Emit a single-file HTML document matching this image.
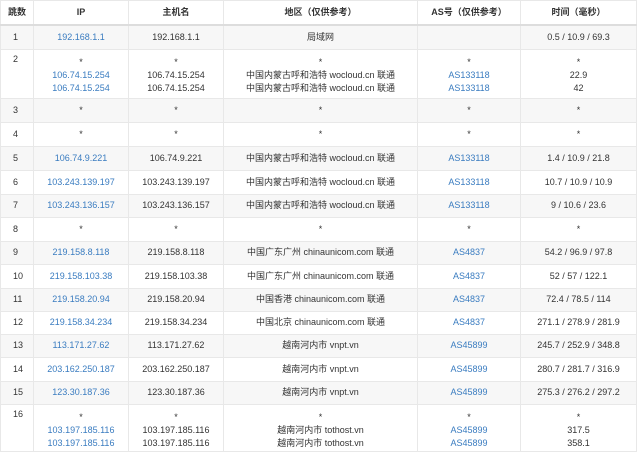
<!DOCTYPE html><html><head><meta charset="utf-8"><style>
body{margin:0;background:#fff;font-family:"Liberation Sans","Noto Sans CJK SC",sans-serif;font-size:9px;color:#333;width:640px;height:453px;overflow:hidden}
table{border-collapse:collapse;table-layout:fixed;width:636px;position:absolute;left:0;top:0}
td,th{border:1px solid #e8e8e8;text-align:center;padding:0;line-height:13px;vertical-align:middle}
th{font-weight:bold;height:23px;border-bottom:2px solid #ddd;color:#333}
tr:nth-child(odd) td{background:#f7f7f7}
td:first-child{text-align:left;padding-left:12px}
.b{color:#3a7cc0}
.m td{vertical-align:top;padding-top:6px}
.m td:first-child{padding-top:3px}
</style></head><body>
<table>
<colgroup><col style="width:33px"><col style="width:95px"><col style="width:95px"><col style="width:194px"><col style="width:103px"><col style="width:116px"></colgroup>
<thead><tr><th>跳数</th><th>IP</th><th>主机名</th><th>地区（仅供参考）</th><th>AS号（仅供参考）</th><th>时间（毫秒）</th></tr></thead>
<tbody>
<tr style="height:24px"><td>1</td><td class="b">192.168.1.1</td><td>192.168.1.1</td><td>局域网</td><td></td><td>0.5 / 10.9 / 69.3</td></tr>
<tr class="m" style="height:49px"><td>2</td><td>*<br><span class="b">106.74.15.254<br>106.74.15.254</span></td><td>*<br>106.74.15.254<br>106.74.15.254</td><td>*<br>中国内蒙古呼和浩特 wocloud.cn 联通<br>中国内蒙古呼和浩特 wocloud.cn 联通</td><td>*<br><span class="b">AS133118<br>AS133118</span></td><td>*<br>22.9<br>42</td></tr>
<tr style="height:24px"><td>3</td><td>*</td><td>*</td><td>*</td><td>*</td><td>*</td></tr>
<tr style="height:24px"><td>4</td><td>*</td><td>*</td><td>*</td><td>*</td><td>*</td></tr>
<tr style="height:24px"><td>5</td><td class="b">106.74.9.221</td><td>106.74.9.221</td><td>中国内蒙古呼和浩特 wocloud.cn 联通</td><td class="b">AS133118</td><td>1.4 / 10.9 / 21.8</td></tr>
<tr style="height:24px"><td>6</td><td class="b">103.243.139.197</td><td>103.243.139.197</td><td>中国内蒙古呼和浩特 wocloud.cn 联通</td><td class="b">AS133118</td><td>10.7 / 10.9 / 10.9</td></tr>
<tr style="height:23px"><td>7</td><td class="b">103.243.136.157</td><td>103.243.136.157</td><td>中国内蒙古呼和浩特 wocloud.cn 联通</td><td class="b">AS133118</td><td>9 / 10.6 / 23.6</td></tr>
<tr style="height:24px"><td>8</td><td>*</td><td>*</td><td>*</td><td>*</td><td>*</td></tr>
<tr style="height:23px"><td>9</td><td class="b">219.158.8.118</td><td>219.158.8.118</td><td>中国广东广州 chinaunicom.com 联通</td><td class="b">AS4837</td><td>54.2 / 96.9 / 97.8</td></tr>
<tr style="height:24px"><td>10</td><td class="b">219.158.103.38</td><td>219.158.103.38</td><td>中国广东广州 chinaunicom.com 联通</td><td class="b">AS4837</td><td>52 / 57 / 122.1</td></tr>
<tr style="height:23px"><td>11</td><td class="b">219.158.20.94</td><td>219.158.20.94</td><td>中国香港 chinaunicom.com 联通</td><td class="b">AS4837</td><td>72.4 / 78.5 / 114</td></tr>
<tr style="height:23px"><td>12</td><td class="b">219.158.34.234</td><td>219.158.34.234</td><td>中国北京 chinaunicom.com 联通</td><td class="b">AS4837</td><td>271.1 / 278.9 / 281.9</td></tr>
<tr style="height:23px"><td>13</td><td class="b">113.171.27.62</td><td>113.171.27.62</td><td>越南河内市 vnpt.vn</td><td class="b">AS45899</td><td>245.7 / 252.9 / 348.8</td></tr>
<tr style="height:24px"><td>14</td><td class="b">203.162.250.187</td><td>203.162.250.187</td><td>越南河内市 vnpt.vn</td><td class="b">AS45899</td><td>280.7 / 281.7 / 316.9</td></tr>
<tr style="height:23px"><td>15</td><td class="b">123.30.187.36</td><td>123.30.187.36</td><td>越南河内市 vnpt.vn</td><td class="b">AS45899</td><td>275.3 / 276.2 / 297.2</td></tr>
<tr class="m" style="height:47px"><td>16</td><td>*<br><span class="b">103.197.185.116<br>103.197.185.116</span></td><td>*<br>103.197.185.116<br>103.197.185.116</td><td>*<br>越南河内市 tothost.vn<br>越南河内市 tothost.vn</td><td>*<br><span class="b">AS45899<br>AS45899</span></td><td>*<br>317.5<br>358.1</td></tr>
</tbody></table>
</body></html>
